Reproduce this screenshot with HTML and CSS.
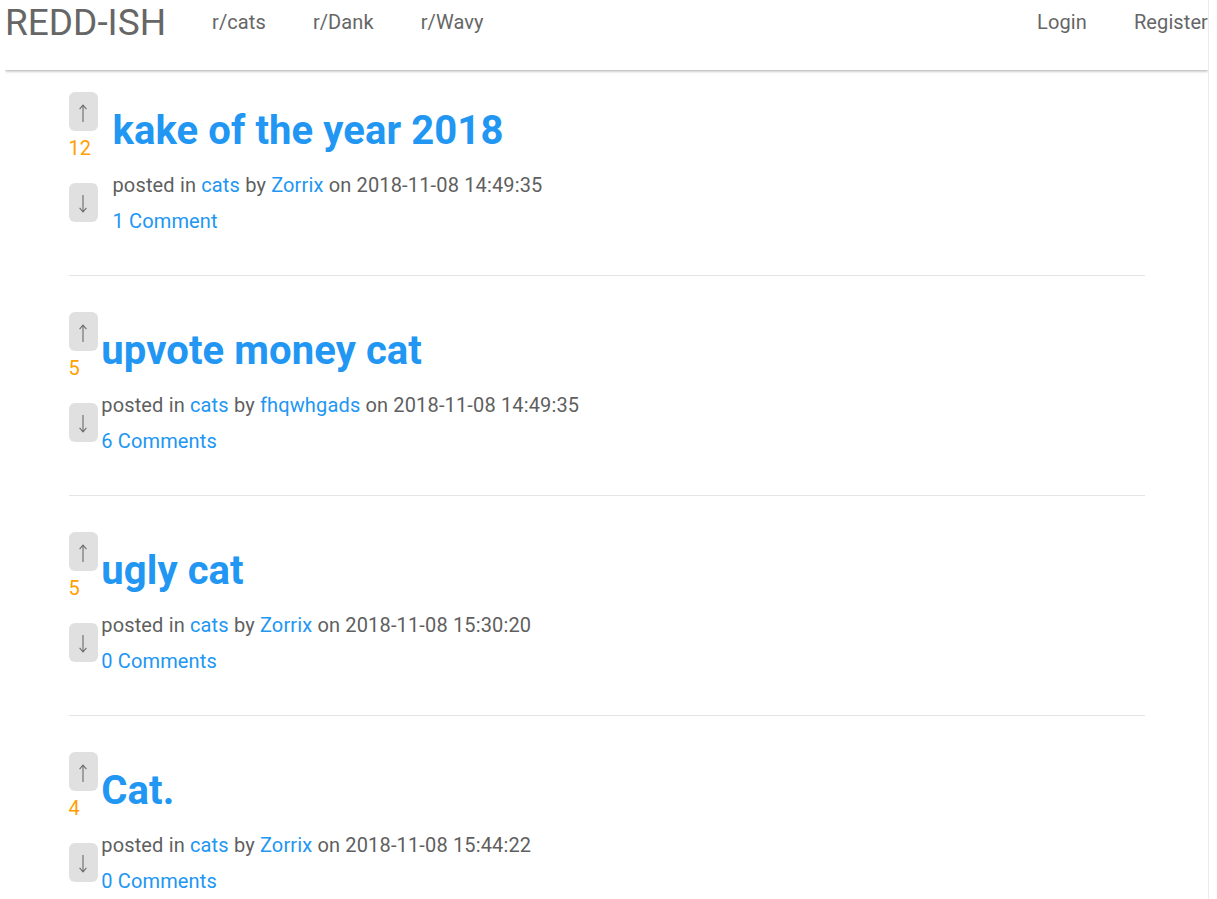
FILE: index.html
```html
<!DOCTYPE html>
<html>
<head>
<meta charset="utf-8">
<title>REDD-ISH</title>
<link rel="stylesheet" href="styles.css">
</head>
<body>
<div class="page">
  <header class="topbar">
    <a class="logo" href="#">REDD-ISH</a>
    <nav class="nav">
      <a href="#">r/cats</a>
      <a href="#">r/Dank</a>
      <a href="#">r/Wavy</a>
    </nav>
    <nav class="nav nav-right">
      <a href="#">Login</a>
      <a href="#">Register</a>
    </nav>
  </header>

  <main class="feed">
    <article class="post">
      <div class="vote">
        <button class="vote-btn" aria-label="upvote"><svg width="10" height="20" viewBox="0 0 10 20"><path d="M5 19V2M1.6 6.2L5 2l3.4 4.2"/></svg></button>
        <span class="score">12</span>
        <button class="vote-btn" aria-label="downvote"><svg width="10" height="20" viewBox="0 0 10 20"><path d="M5 1v17M1.6 13.8L5 18l3.4-4.2"/></svg></button>
      </div>
      <div class="body">
        <h2 class="title"><a href="#">kake of the year 2018</a></h2>
        <p class="meta">posted in <a href="#">cats</a> by <a href="#">Zorrix</a> on 2018-11-08 14:49:35</p>
        <p class="comments"><a href="#">1 Comment</a></p>
      </div>
    </article>

    <article class="post">
      <div class="vote">
        <button class="vote-btn" aria-label="upvote"><svg width="10" height="20" viewBox="0 0 10 20"><path d="M5 19V2M1.6 6.2L5 2l3.4 4.2"/></svg></button>
        <span class="score">5</span>
        <button class="vote-btn" aria-label="downvote"><svg width="10" height="20" viewBox="0 0 10 20"><path d="M5 1v17M1.6 13.8L5 18l3.4-4.2"/></svg></button>
      </div>
      <div class="body">
        <h2 class="title"><a href="#">upvote money cat</a></h2>
        <p class="meta">posted in <a href="#">cats</a> by <a href="#">fhqwhgads</a> on 2018-11-08 14:49:35</p>
        <p class="comments"><a href="#">6 Comments</a></p>
      </div>
    </article>

    <article class="post">
      <div class="vote">
        <button class="vote-btn" aria-label="upvote"><svg width="10" height="20" viewBox="0 0 10 20"><path d="M5 19V2M1.6 6.2L5 2l3.4 4.2"/></svg></button>
        <span class="score">5</span>
        <button class="vote-btn" aria-label="downvote"><svg width="10" height="20" viewBox="0 0 10 20"><path d="M5 1v17M1.6 13.8L5 18l3.4-4.2"/></svg></button>
      </div>
      <div class="body">
        <h2 class="title"><a href="#">ugly cat</a></h2>
        <p class="meta">posted in <a href="#">cats</a> by <a href="#">Zorrix</a> on 2018-11-08 15:30:20</p>
        <p class="comments"><a href="#">0 Comments</a></p>
      </div>
    </article>

    <article class="post">
      <div class="vote">
        <button class="vote-btn" aria-label="upvote"><svg width="10" height="20" viewBox="0 0 10 20"><path d="M5 19V2M1.6 6.2L5 2l3.4 4.2"/></svg></button>
        <span class="score">4</span>
        <button class="vote-btn" aria-label="downvote"><svg width="10" height="20" viewBox="0 0 10 20"><path d="M5 1v17M1.6 13.8L5 18l3.4-4.2"/></svg></button>
      </div>
      <div class="body">
        <h2 class="title"><a href="#">Cat.</a></h2>
        <p class="meta">posted in <a href="#">cats</a> by <a href="#">Zorrix</a> on 2018-11-08 15:44:22</p>
        <p class="comments"><a href="#">0 Comments</a></p>
      </div>
    </article>
  </main>
</div>
</body>
</html>
```

FILE: styles.css
```css
html, body {
  margin: 0;
  padding: 0;
  background: #fff;
}

body {
  font-family: Roboto, "Liberation Sans", sans-serif;
  color: #616161;
}

a {
  text-decoration: none;
}

.page {
  margin-left: 5px;
  width: 1203px;
  min-height: 100vh;
  border-right: 1px solid #ebebeb;
  overflow: hidden;
}

.topbar {
  display: flex;
  align-items: flex-start;
  height: 70px;
  box-shadow: 0 1px 3px rgba(0, 0, 0, 0.35);
  position: relative;
  background: #fff;
}

.logo {
  font-size: 37px;
  line-height: 40px;
  padding-top: 3px;
  color: #666;
  font-weight: 400;
}

.nav {
  display: flex;
  gap: 47px;
  margin-left: 46px;
  margin-top: 10px;
}

.nav a {
  font-size: 20px;
  line-height: 24px;
  color: #666;
  letter-spacing: 0.1px;
}

.nav-right {
  margin-left: auto;
}

.feed {
  width: 1076px;
  margin: 0 auto;
  padding-top: 22px;
}

.post {
  display: flex;
  gap: 3px;
  padding-bottom: 42px;
  margin-bottom: 36px;
  border-bottom: 1px solid #e4e4e4;
}

.vote {
  display: flex;
  flex-direction: column;
  align-items: flex-start;
}

.vote-btn {
  width: 29px;
  height: 39px;
  padding: 0;
  border: none;
  border-radius: 6px;
  background: #e0e0e0;
  display: flex;
  align-items: center;
  justify-content: center;
  padding-top: 3px;
}

.vote-btn svg {
  fill: none;
  stroke: #6a6a6a;
  stroke-width: 1.1;
}

.score {
  font-size: 20px;
  line-height: 24px;
  color: #ffa000;
  padding-top: 5px;
  padding-right: 18.5px;
  margin-bottom: 23px;
}

.body {
  padding-top: 15px;
}

.title {
  margin: 0;
  font-size: 40px;
  line-height: 48px;
  font-weight: 700;
  letter-spacing: 0.1px;
}

.title a {
  color: #2196f3;
}

.meta,
.comments {
  margin: 0;
  font-size: 20px;
  line-height: 24px;
  color: #5f5f5f;
  letter-spacing: 0.15px;
}

.meta {
  margin-top: 18px;
}

.comments {
  margin-top: 12px;
}

.meta a,
.comments a {
  color: #2196f3;
}
```
